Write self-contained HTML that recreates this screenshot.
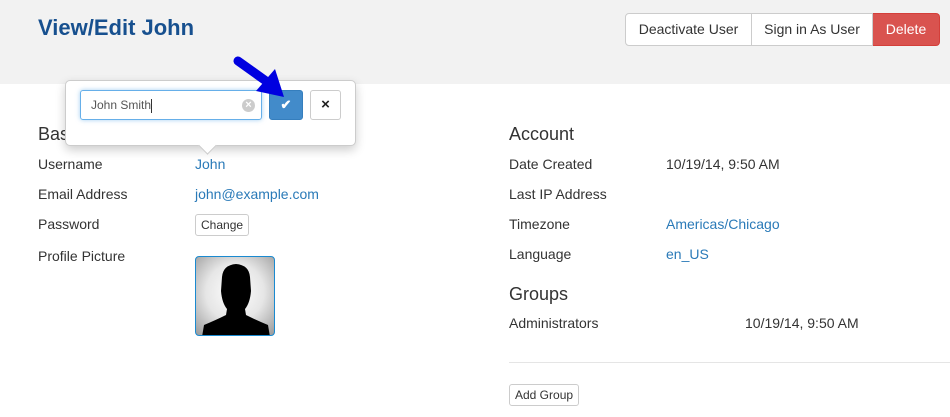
<!DOCTYPE html>
<html><head><style>
body{margin:0;width:950px;height:417px;overflow:hidden;background:#fff;font-family:"Liberation Sans",sans-serif;font-size:14px;color:#333;position:relative}
.hdr{position:absolute;left:0;top:0;width:950px;height:84px;background:#f2f2f2}
h1{position:absolute;left:38px;top:15px;margin:0;font-size:22px;font-weight:bold;color:#17508f}
.btns{position:absolute;top:13px;left:625px;display:flex;height:33px}
.btns div{box-sizing:border-box;height:33px;line-height:31px;border:1px solid #ccc;background:#fff;text-align:center;font-size:14px}
.btns div+div{border-left:none}
.btns .d{background:#d9534f;border-color:#d43f3a;color:#fff;border-radius:0 4px 4px 0}
.btns .f{border-radius:4px 0 0 4px}
.t{position:absolute;white-space:nowrap}
.a{color:#2a7ab8}
h2{position:absolute;margin:0;font-size:18px;font-weight:normal;color:#333}
.sm{position:absolute;border:1px solid #ccc;border-radius:3px;font-size:12px;padding:0 5px;line-height:20px;box-sizing:border-box;height:22px;background:#fff}
.pop{position:absolute;left:65px;top:80px;width:291px;height:66px;box-sizing:border-box;background:#fff;border:1px solid #ccc;border-radius:5px;box-shadow:0 4px 10px rgba(0,0,0,.2)}
.inp{position:absolute;left:80px;top:90px;width:182px;height:30px;box-sizing:border-box;border:1px solid #66afe9;border-radius:3px;box-shadow:0 0 5px rgba(102,175,233,.6);font-size:12px;line-height:28px;padding-left:10px;color:#555}
</style></head><body>
<div class="hdr"></div>
<h1>View/Edit John</h1>
<div class="btns"><div class="f" style="width:127px">Deactivate User</div><div style="width:121px">Sign in As User</div><div class="d" style="width:67px">Delete</div></div>

<h2 style="left:38px;top:124px">Basic</h2>
<div class="t" style="left:38px;top:156px">Username</div><div class="t a" style="left:195px;top:156px">John</div>
<div class="t" style="left:38px;top:186px">Email Address</div><div class="t a" style="left:195px;top:186px">john@example.com</div>
<div class="t" style="left:38px;top:216px">Password</div><div class="sm" style="left:195px;top:214px">Change</div>
<div class="t" style="left:38px;top:248px">Profile Picture</div>
<div style="position:absolute;left:195px;top:256px;width:80px;height:80px;box-sizing:border-box;border:1px solid #1a8ad0;border-radius:4px;overflow:hidden;background:radial-gradient(circle at 50% 45%,#fff 0,#e6e6e6 50%,#999 100%)">
<svg width="80" height="80" viewBox="0 0 80 80"><path d="M26 20 Q27 8 40 7 Q53 8 54 20 L55 34 Q54 46 49 52 L50 58 Q60 63 72 68 L74 80 L6 80 L8 68 Q20 63 30 58 L31 52 Q26 46 25 34 Z" fill="#000"/></svg></div>

<h2 style="left:509px;top:124px">Account</h2>
<div class="t" style="left:509px;top:156px">Date Created</div><div class="t" style="left:666px;top:156px">10/19/14, 9:50 AM</div>
<div class="t" style="left:509px;top:186px">Last IP Address</div>
<div class="t" style="left:509px;top:216px">Timezone</div><div class="t a" style="left:666px;top:216px">Americas/Chicago</div>
<div class="t" style="left:509px;top:246px">Language</div><div class="t a" style="left:666px;top:246px">en_US</div>
<h2 style="left:509px;top:284px">Groups</h2>
<div class="t" style="left:509px;top:315px">Administrators</div><div class="t" style="left:745px;top:315px">10/19/14, 9:50 AM</div>
<div style="position:absolute;left:509px;top:362px;width:441px;height:1px;background:#e5e5e5"></div>
<div class="sm" style="left:509px;top:384px">Add Group</div>

<div class="pop"></div>
<div style="position:absolute;left:201px;top:139px;width:12px;height:12px;background:#fff;border-right:1px solid #ccc;border-bottom:1px solid #ccc;transform:rotate(45deg)"></div>
<div class="inp">John Smith<span style="display:inline-block;width:1px;height:14px;background:#333;vertical-align:middle"></span>
<span style="position:absolute;right:6px;top:8px;width:13px;height:13px;border-radius:50%;background:#ccc;color:#fff;font-size:11px;line-height:13px;text-align:center;font-weight:bold">×</span></div>
<div style="position:absolute;left:269px;top:90px;width:34px;height:30px;background:#428bca;border:1px solid #357ebd;box-sizing:border-box;border-radius:3px;color:#fff;text-align:center;line-height:28px;font-size:13px;font-weight:bold">✔</div>
<div style="position:absolute;left:310px;top:90px;width:31px;height:30px;background:#fff;border:1px solid #ccc;box-sizing:border-box;border-radius:3px;color:#222;text-align:center;line-height:28px;font-size:15px;font-weight:bold">×</div>
<svg style="position:absolute;left:228px;top:52px" width="60" height="50" viewBox="0 0 60 50"><path d="M10 9 L38 29" stroke="#0000e0" stroke-width="9" stroke-linecap="round"/><path d="M28 39 L56 45 L47 17 Z" fill="#0000e0"/></svg>
</body></html>
